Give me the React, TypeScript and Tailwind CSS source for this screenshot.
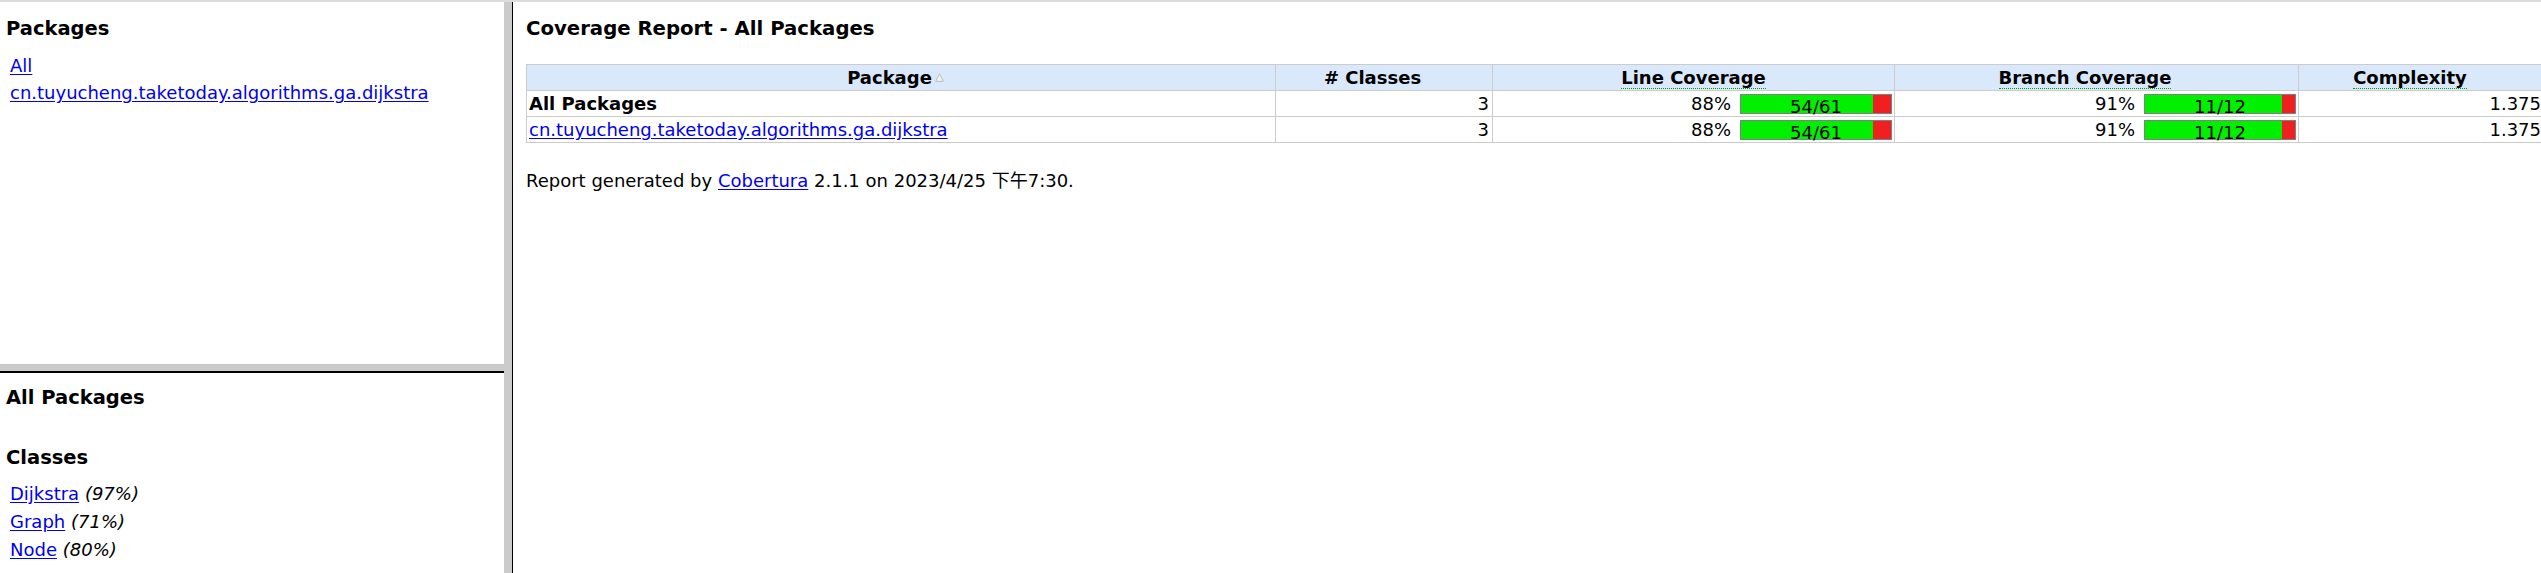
import React from "react";

interface PackageRow {
  name: string;
  href?: string;
  classes: number;
  line: { pct: number; covered: number; total: number };
  branch: { pct: number; covered: number; total: number };
  complexity: string;
}

const rows: PackageRow[] = [
  {
    name: "All Packages",
    classes: 3,
    line: { pct: 88, covered: 54, total: 61 },
    branch: { pct: 91, covered: 11, total: 12 },
    complexity: "1.375",
  },
  {
    name: "cn.tuyucheng.taketoday.algorithms.ga.dijkstra",
    href: "#",
    classes: 3,
    line: { pct: 88, covered: 54, total: 61 },
    branch: { pct: 91, covered: 11, total: 12 },
    complexity: "1.375",
  },
];

const classes = [
  { name: "Dijkstra", pct: 97 },
  { name: "Graph", pct: 71 },
  { name: "Node", pct: 80 },
];

const linkClass = "text-[#0000ee] underline underline-offset-[2px]";
const thClass = "h-[25px] border border-[#cccccc] text-center font-bold leading-[25px]";
const tdClass = "h-[25px] border border-[#cccccc] leading-[25px]";

// bar is 150px wide inside its border, green part = floor(pct) * 1.5
function PercentGraph({ pct, covered, total }: { pct: number; covered: number; total: number }) {
  const green = Math.floor((covered / total) * 100) * 1.5;
  return (
    <div className="flex items-center justify-end gap-[9px]">
      <span>{pct}%</span>
      <div className="relative h-[20px] w-[152px] border border-[#808080] bg-[#f02020]">
        <div className="h-full bg-[#00f000]" style={{ width: green }} />
        <span className="absolute inset-x-0 top-[1px] text-center leading-[22px]">
          {covered}/{total}
        </span>
      </div>
    </div>
  );
}

function SortArrow() {
  return (
    <svg className="ml-[3px] inline-block align-[2px]" width="9" height="9" viewBox="0 0 9 9">
      <path d="M4.5 0.8 L8.3 8.3 L0.7 8.3 Z" fill="#f2f2f2" stroke="#bdbdbd" strokeWidth="1" />
    </svg>
  );
}

function PackagesFrame() {
  return (
    <div className="h-[362px] shrink-0 overflow-hidden">
      <h5 className="mt-[15px] pl-[6px] text-[19.5px] font-bold leading-[23px]">Packages</h5>
      <ul className="mt-[12px] pl-[10px] text-[18px] leading-[27px]">
        <li>
          <a href="#" className={linkClass}>All</a>
        </li>
        <li>
          <a href="#" className={linkClass}>cn.tuyucheng.taketoday.algorithms.ga.dijkstra</a>
        </li>
      </ul>
    </div>
  );
}

function ClassesFrame() {
  return (
    <div className="min-h-0 flex-1 overflow-hidden">
      <h5 className="mt-[13px] pl-[6px] text-[19.5px] font-bold leading-[23px]">All Packages</h5>
      <h5 className="mt-[37px] pl-[6px] text-[19.5px] font-bold leading-[23px]">Classes</h5>
      <ul className="mt-[11px] pl-[10px] text-[18px] leading-[28px]">
        {classes.map((c) => (
          <li key={c.name}>
            <a href="#" className={linkClass}>{c.name}</a> <i>({c.pct}%)</i>
          </li>
        ))}
      </ul>
    </div>
  );
}

function ReportFrame() {
  return (
    <div className="min-w-0 flex-1 overflow-hidden pl-[13px]">
      <h1 className="mt-[15px] text-[19.7px] font-bold leading-[23px]">Coverage Report - All Packages</h1>
      <table className="mt-[24px] w-[2018px] table-fixed border-collapse text-[18px]">
        <colgroup>
          <col className="w-[749px]" />
          <col className="w-[217px]" />
          <col className="w-[402px]" />
          <col className="w-[404px]" />
          <col className="w-[246px]" />
        </colgroup>
        <thead>
          <tr className="bg-[#dae8fb]">
            <th className={`${thClass} pl-[3px] pr-[14px]`}>
              Package<SortArrow />
            </th>
            <th className={`${thClass} pl-[3px] pr-[26px]`}># Classes</th>
            <th className={`${thClass} px-[3px]`}>
              <span className="border-b border-dotted border-[#00a000] leading-[22px]">Line Coverage</span>
            </th>
            <th className={`${thClass} pl-[3px] pr-[26px]`}>
              <span className="border-b border-dotted border-[#00a000] leading-[22px]">Branch Coverage</span>
            </th>
            <th className={`${thClass} pl-[3px] pr-[26px]`}>
              <span className="border-b border-dotted border-[#00a000] leading-[22px]">Complexity</span>
            </th>
          </tr>
        </thead>
        <tbody>
          {rows.map((r) => (
            <tr key={r.name}>
              <td className={`${tdClass} truncate px-[2px]`}>
                {r.href ? (
                  <a href={r.href} className={linkClass}>{r.name}</a>
                ) : (
                  <b>{r.name}</b>
                )}
              </td>
              <td className={`${tdClass} px-[3px] text-right`}>{r.classes}</td>
              <td className={`${tdClass} px-[2px]`}>
                <PercentGraph {...r.line} />
              </td>
              <td className={`${tdClass} px-[2px]`}>
                <PercentGraph {...r.branch} />
              </td>
              <td className={`${tdClass} px-[3px] text-right`}>{r.complexity}</td>
            </tr>
          ))}
        </tbody>
      </table>
      <p className="mt-[24px] text-[18px] leading-[27px]">
        Report generated by{" "}
        <a href="#" className={linkClass}>Cobertura</a> 2.1.1 on 2023/4/25 下午7:30.
      </p>
    </div>
  );
}

export default function App() {
  return (
    <div className="flex h-[573px] w-[2541px] flex-col overflow-hidden bg-white font-['DejaVu_Sans','Noto_Sans_CJK_SC',sans-serif] text-black">
      <div className="h-[2px] shrink-0 bg-[#dcdcdc]" />
      <div className="flex min-h-0 flex-1">
        <div className="flex w-[504px] shrink-0 flex-col">
          <PackagesFrame />
          <div className="h-[7px] shrink-0 bg-[#cbcbcb]" />
          <div className="h-[2px] shrink-0 bg-black" />
          <ClassesFrame />
        </div>
        <div className="w-[8px] shrink-0 bg-[#cbcbcb]" />
        <div className="w-[1px] shrink-0 bg-black" />
        <ReportFrame />
      </div>
    </div>
  );
}
